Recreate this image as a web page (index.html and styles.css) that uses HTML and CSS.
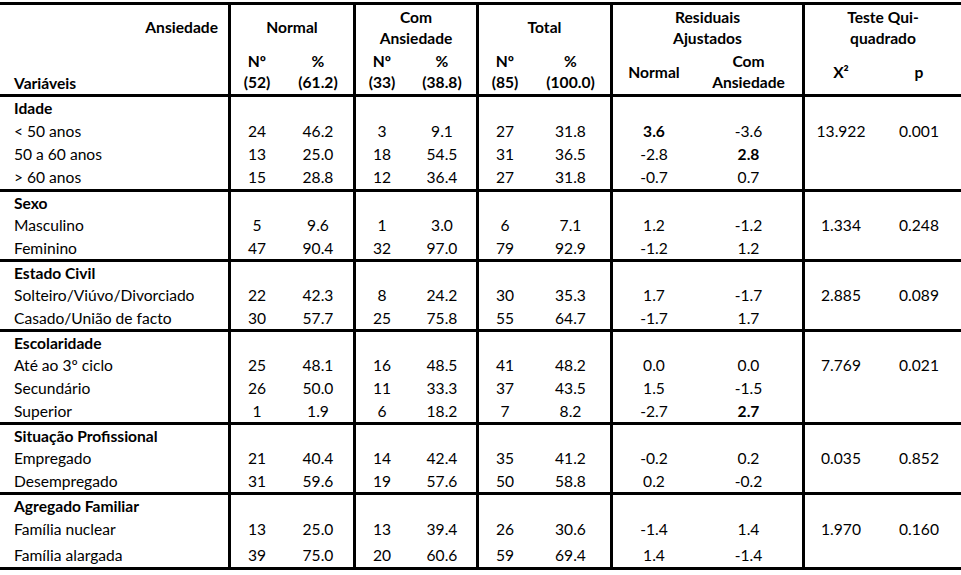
FILE: index.html
```html
<!DOCTYPE html>
<html lang="pt">
<head>
<meta charset="utf-8">
<title>Ansiedade</title>
<link rel="stylesheet" href="styles.css">
</head>
<body>
<div class="tbl">
  <div class="head">
    <div class="c e corner"><span class="anx b">Ansiedade</span><span class="var b">Variáveis</span></div>
    <div class="c e b span2">Normal</div>
    <div class="c e b span2 two">Com<br>Ansiedade</div>
    <div class="c e b span2">Total</div>
    <div class="c e b span2 two">Residuais<br>Ajustados</div>
    <div class="c b span2 two">Teste Qui-<br>quadrado</div>
    <div class="c b two">Nº<br>(52)</div>
    <div class="c e b two">%<br>(61.2)</div>
    <div class="c b two">Nº<br>(33)</div>
    <div class="c e b two">%<br>(38.8)</div>
    <div class="c b two">Nº<br>(85)</div>
    <div class="c e b two">%<br>(100.0)</div>
    <div class="c b">Normal</div>
    <div class="c e b two">Com<br>Ansiedade</div>
    <div class="c b">X²</div>
    <div class="c b">p</div>
  </div>

  <div class="grp">
    <div class="row"><div class="c e lbl b">Idade</div><div class="c"></div><div class="c e"></div><div class="c"></div><div class="c e"></div><div class="c"></div><div class="c e"></div><div class="c"></div><div class="c e"></div><div class="c"></div><div class="c"></div></div>
    <div class="row"><div class="c e lbl">&lt; 50 anos</div><div class="c">24</div><div class="c e">46.2</div><div class="c">3</div><div class="c e">9.1</div><div class="c">27</div><div class="c e">31.8</div><div class="c b">3.6</div><div class="c e">-3.6</div><div class="c">13.922</div><div class="c">0.001</div></div>
    <div class="row"><div class="c e lbl">50 a 60 anos</div><div class="c">13</div><div class="c e">25.0</div><div class="c">18</div><div class="c e">54.5</div><div class="c">31</div><div class="c e">36.5</div><div class="c">-2.8</div><div class="c e b">2.8</div><div class="c"></div><div class="c"></div></div>
    <div class="row"><div class="c e lbl">&gt; 60 anos</div><div class="c">15</div><div class="c e">28.8</div><div class="c">12</div><div class="c e">36.4</div><div class="c">27</div><div class="c e">31.8</div><div class="c">-0.7</div><div class="c e">0.7</div><div class="c"></div><div class="c"></div></div>
  </div>

  <div class="grp">
    <div class="row s"><div class="c e lbl b">Sexo</div><div class="c"></div><div class="c e"></div><div class="c"></div><div class="c e"></div><div class="c"></div><div class="c e"></div><div class="c"></div><div class="c e"></div><div class="c"></div><div class="c"></div></div>
    <div class="row"><div class="c e lbl">Masculino</div><div class="c">5</div><div class="c e">9.6</div><div class="c">1</div><div class="c e">3.0</div><div class="c">6</div><div class="c e">7.1</div><div class="c">1.2</div><div class="c e">-1.2</div><div class="c">1.334</div><div class="c">0.248</div></div>
    <div class="row s"><div class="c e lbl">Feminino</div><div class="c">47</div><div class="c e">90.4</div><div class="c">32</div><div class="c e">97.0</div><div class="c">79</div><div class="c e">92.9</div><div class="c">-1.2</div><div class="c e">1.2</div><div class="c"></div><div class="c"></div></div>
  </div>

  <div class="grp">
    <div class="row s"><div class="c e lbl b">Estado Civil</div><div class="c"></div><div class="c e"></div><div class="c"></div><div class="c e"></div><div class="c"></div><div class="c e"></div><div class="c"></div><div class="c e"></div><div class="c"></div><div class="c"></div></div>
    <div class="row"><div class="c e lbl">Solteiro/Viúvo/Divorciado</div><div class="c">22</div><div class="c e">42.3</div><div class="c">8</div><div class="c e">24.2</div><div class="c">30</div><div class="c e">35.3</div><div class="c">1.7</div><div class="c e">-1.7</div><div class="c">2.885</div><div class="c">0.089</div></div>
    <div class="row s"><div class="c e lbl">Casado/União de facto</div><div class="c">30</div><div class="c e">57.7</div><div class="c">25</div><div class="c e">75.8</div><div class="c">55</div><div class="c e">64.7</div><div class="c">-1.7</div><div class="c e">1.7</div><div class="c"></div><div class="c"></div></div>
  </div>

  <div class="grp">
    <div class="row s"><div class="c e lbl b">Escolaridade</div><div class="c"></div><div class="c e"></div><div class="c"></div><div class="c e"></div><div class="c"></div><div class="c e"></div><div class="c"></div><div class="c e"></div><div class="c"></div><div class="c"></div></div>
    <div class="row"><div class="c e lbl">Até ao 3º ciclo</div><div class="c">25</div><div class="c e">48.1</div><div class="c">16</div><div class="c e">48.5</div><div class="c">41</div><div class="c e">48.2</div><div class="c">0.0</div><div class="c e">0.0</div><div class="c">7.769</div><div class="c">0.021</div></div>
    <div class="row"><div class="c e lbl">Secundário</div><div class="c">26</div><div class="c e">50.0</div><div class="c">11</div><div class="c e">33.3</div><div class="c">37</div><div class="c e">43.5</div><div class="c">1.5</div><div class="c e">-1.5</div><div class="c"></div><div class="c"></div></div>
    <div class="row s"><div class="c e lbl">Superior</div><div class="c">1</div><div class="c e">1.9</div><div class="c">6</div><div class="c e">18.2</div><div class="c">7</div><div class="c e">8.2</div><div class="c">-2.7</div><div class="c e b">2.7</div><div class="c"></div><div class="c"></div></div>
  </div>

  <div class="grp">
    <div class="row s"><div class="c e lbl b">Situação Profissional</div><div class="c"></div><div class="c e"></div><div class="c"></div><div class="c e"></div><div class="c"></div><div class="c e"></div><div class="c"></div><div class="c e"></div><div class="c"></div><div class="c"></div></div>
    <div class="row"><div class="c e lbl">Empregado</div><div class="c">21</div><div class="c e">40.4</div><div class="c">14</div><div class="c e">42.4</div><div class="c">35</div><div class="c e">41.2</div><div class="c">-0.2</div><div class="c e">0.2</div><div class="c">0.035</div><div class="c">0.852</div></div>
    <div class="row s"><div class="c e lbl">Desempregado</div><div class="c">31</div><div class="c e">59.6</div><div class="c">19</div><div class="c e">57.6</div><div class="c">50</div><div class="c e">58.8</div><div class="c">0.2</div><div class="c e">-0.2</div><div class="c"></div><div class="c"></div></div>
  </div>

  <div class="grp">
    <div class="row"><div class="c e lbl b">Agregado Familiar</div><div class="c"></div><div class="c e"></div><div class="c"></div><div class="c e"></div><div class="c"></div><div class="c e"></div><div class="c"></div><div class="c e"></div><div class="c"></div><div class="c"></div></div>
    <div class="row"><div class="c e lbl">Família nuclear</div><div class="c">13</div><div class="c e">25.0</div><div class="c">13</div><div class="c e">39.4</div><div class="c">26</div><div class="c e">30.6</div><div class="c">-1.4</div><div class="c e">1.4</div><div class="c">1.970</div><div class="c">0.160</div></div>
    <div class="row t"><div class="c e lbl">Família alargada</div><div class="c">39</div><div class="c e">75.0</div><div class="c">20</div><div class="c e">60.6</div><div class="c">59</div><div class="c e">69.4</div><div class="c">1.4</div><div class="c e">-1.4</div><div class="c"></div><div class="c"></div></div>
  </div>
</div>
</body>
</html>
```

FILE: styles.css
```css
body {
  margin: 0;
  background: #fff;
  color: #000;
  font-family: Lato, "Open Sans", "DejaVu Sans", sans-serif;
  font-size: 15.6px;
}

.tbl {
  width: 961px;
  margin-top: 2px;
  border-top: 3px solid #000;
}

.head,
.row {
  display: grid;
  grid-template-columns: 231px 52px 73px 52px 71px 52px 82px 82px 110px 72px 84px;
}

.head {
  grid-template-rows: 45px 44px;
  border-bottom: 3px solid #000;
}

.grp {
  border-bottom: 3px solid #000;
}

.row { height: 23px; }
.row.s { height: 22px; }
.row.t { height: 26px; }
.row.t .c { padding-top: 3px; }

.c {
  box-sizing: border-box;
  display: flex;
  align-items: center;
  justify-content: center;
  text-align: center;
  white-space: nowrap;
  line-height: 21px;
}

.e { border-right: 3px solid #000; }

.b { font-weight: 700; }

.lbl {
  justify-content: flex-start;
  padding-left: 14px;
}

.span2 { grid-column: span 2; }

.two { line-height: 21px; }

.corner {
  grid-row: span 2;
  display: grid;
  grid-template-rows: 45px 44px;
  justify-content: stretch;
  align-items: stretch;
}

.anx {
  align-self: center;
  justify-self: end;
  padding-right: 10px;
}

.var {
  align-self: end;
  justify-self: start;
  padding-left: 14px;
}
```
